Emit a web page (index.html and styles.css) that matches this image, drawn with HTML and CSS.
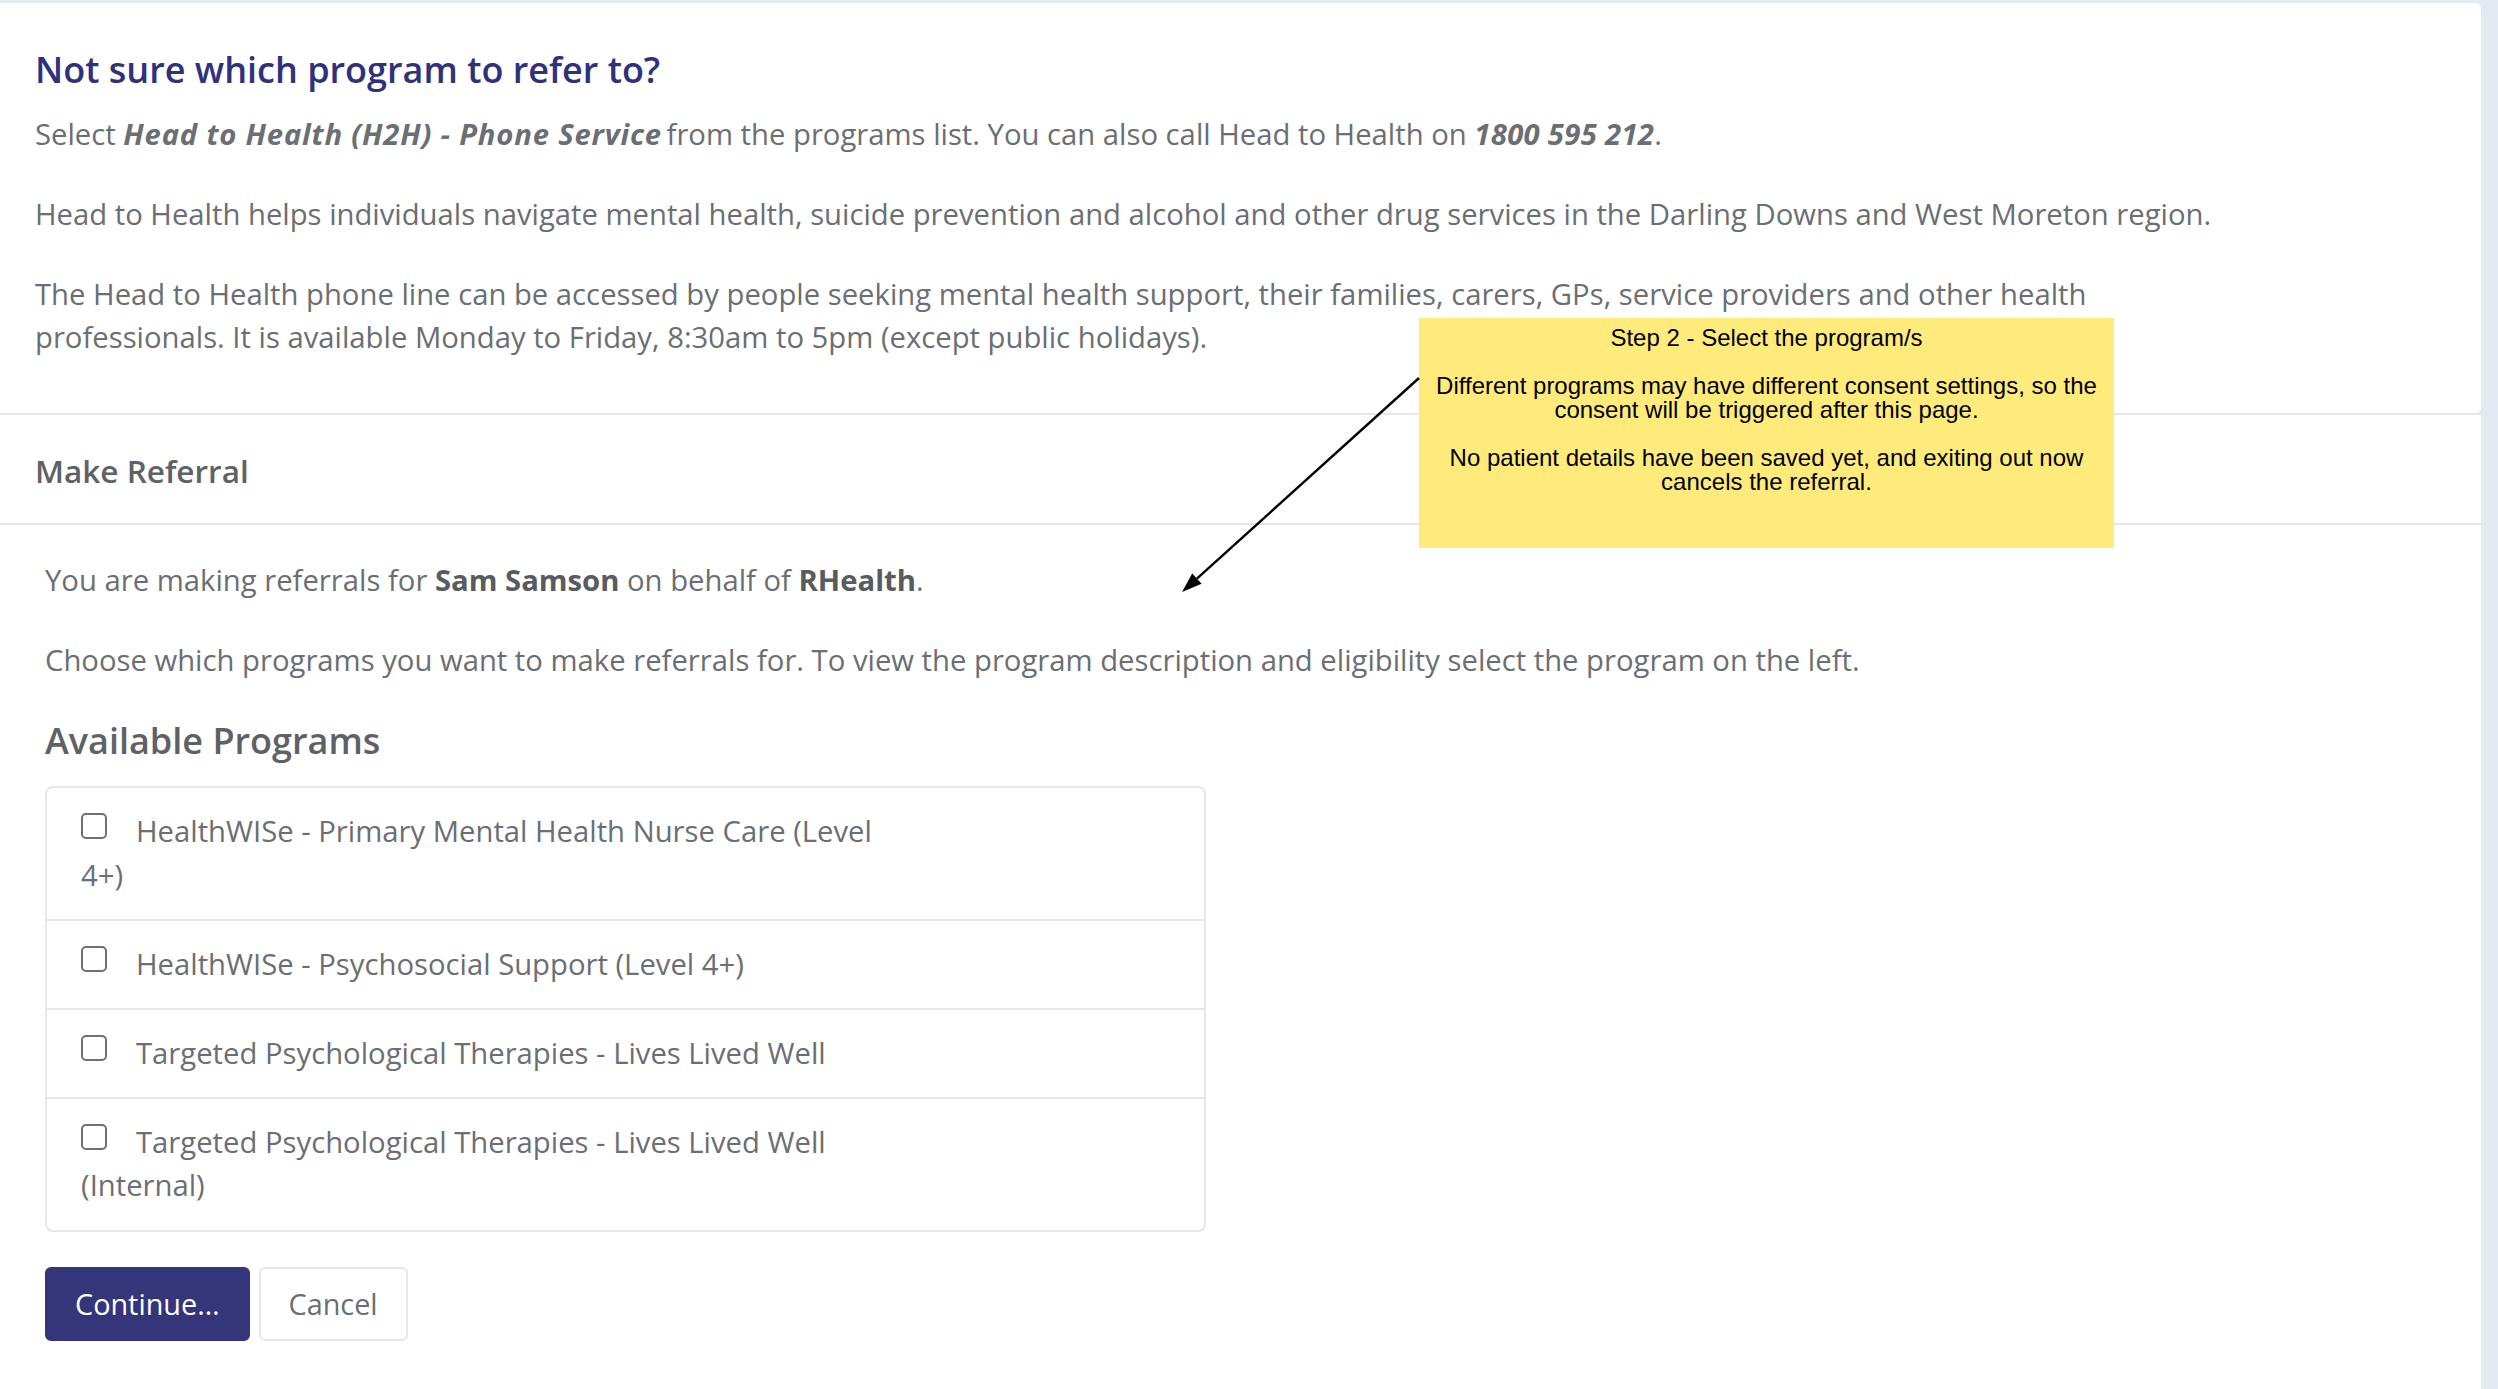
FILE: index.html
```html
<!DOCTYPE html>
<html lang="en">
<head>
<meta charset="utf-8">
<title>Make Referral</title>
<link rel="stylesheet" href="styles.css">
</head>
<body>

<div class="page">

<section class="card info-card">
  <div class="card-body">
    <h5 class="info-title">Not sure which program to refer to?</h5>
    <div class="info-text">
      <p>Select <b><i>Head to Health (H2H) - Phone Service</i></b> from the programs list. You can also call Head to Health on <b><i class="phone">1800 595 212</i></b>.</p>
      <p>Head to Health helps individuals navigate mental health, suicide prevention and alcohol and other drug services in the Darling Downs and West Moreton region.</p>
      <p>The Head to Health phone line can be accessed by people seeking mental health support, their families, carers, GPs, service providers and other health professionals. It is available Monday to Friday, 8:30am to 5pm (except public holidays).</p>
    </div>
  </div>
</section>

<section class="card referral-card">
  <div class="card-header">Make Referral</div>
  <div class="card-body referral-body">
    <p>You are making referrals for <strong>Sam Samson</strong> on behalf of <strong>RHealth</strong>.</p>
    <p>Choose which programs you want to make referrals for. To view the program description and eligibility select the program on the left.</p>

    <h4 class="programs-title">Available Programs</h4>
    <ul class="program-list">
      <li><label><input type="checkbox" class="check">HealthWISe - Primary Mental Health Nurse Care (Level 4+)</label></li>
      <li><label><input type="checkbox" class="check">HealthWISe - Psychosocial Support (Level 4+)</label></li>
      <li><label><input type="checkbox" class="check">Targeted Psychological Therapies - Lives Lived Well</label></li>
      <li><label><input type="checkbox" class="check">Targeted Psychological Therapies - Lives Lived Well (Internal)</label></li>
    </ul>

    <div class="actions">
      <button class="btn btn-primary">Continue…</button>
      <button class="btn btn-light">Cancel</button>
    </div>
  </div>
</section>

<!-- annotation overlay -->
<div class="note">
  <p>Step 2 - Select the program/s</p>
  <p>Different programs may have different consent settings, so the consent will be triggered after this page.</p>
  <p>No patient details have been saved yet, and exiting out now cancels the referral.</p>
</div>
<svg class="note-arrow" width="260" height="230" viewBox="0 0 260 230">
  <line x1="249" y1="8" x2="26.9" y2="208.6" stroke="#000" stroke-width="2.4"/>
  <polygon points="12,222 31.6,213.8 22.2,203.4" fill="#000"/>
</svg>

</div>

</body>
</html>
```

FILE: styles.css
```css
body { margin: 0; background: #e4e9f2;
  font-family: "Open Sans", "Liberation Sans", sans-serif;
  font-size: 29.25px; line-height: 43.2px; color: #6b6e72; }

.page { position: relative; padding: 3px 16px 0 0; min-height: 1386px; }

p { margin: 0 0 36.8px; }
b, strong { font-weight: 700; }
b i { letter-spacing: 0.8px; margin-right: -3px; }
b i.phone { letter-spacing: 0.3px; margin-right: 0; }
strong { color: #585b60; }

/* cards */
.card { background: #fff; border-right: 1px solid #e3e7ee; }
.info-card { border-bottom: 2px solid #e4e8ee; border-radius: 0 6px 6px 0; }
.info-card .card-body { padding: 45px 35px 17px; }
.info-title { margin: 0 0 21.6px; font-size: 36px; line-height: 43.2px;
  font-weight: 600; color: #30317c; }
.info-text { max-width: 2200px; }

.referral-card { min-height: 1000px; }
.card-header { padding: 34px 35px 31px; border-bottom: 2px solid #e4e8ee;
  font-size: 31.5px; font-weight: 600; color: #5e6165; }
.referral-body { padding: 34px 45px 40px; }

.programs-title { margin: 0 0 24px; font-size: 36px; line-height: 43.2px;
  font-weight: 600; color: #5e6165; }

/* list group */
.program-list { list-style: none; margin: 0; padding: 0; width: 1157px;
  border: 2px solid #e4e8ee; border-radius: 8px; }
.program-list li { padding: 22px 34px; border-top: 2px solid #e4e8ee; }
.program-list li:first-child { border-top: 0; }
.program-list label { display: block; max-width: 815px; }
.check { appearance: none; -webkit-appearance: none; margin: 3px 29px 0 0;
  width: 26px; height: 26px; vertical-align: top; box-sizing: border-box;
  border: 2px solid #707070; border-radius: 5px; background: #fff; }

/* buttons */
.actions { display: flex; gap: 9px; margin-top: 35px; }
.btn { font: inherit; font-size: 28.8px; line-height: 43.2px; padding: 13px 28px 14px;
  border: 2px solid transparent; border-radius: 6px; }
.btn-primary { background: #35367a; border-color: #35367a; color: #fff; }
.btn-light { background: #fff; border-color: #e4e8ee; color: #6b6e72; }

/* sticky note annotation */
.note { position: absolute; left: 1419px; top: 318px; width: 695px; height: 230px;
  box-sizing: border-box; padding: 8px 12px 0; background: #feeb7b;
  font-family: "Liberation Sans", Arial, sans-serif; font-size: 24px;
  line-height: 24px; color: #000; text-align: center; }
.note p { margin: 0 0 24px; }
.note-arrow { position: absolute; left: 1170px; top: 370px; }
```
